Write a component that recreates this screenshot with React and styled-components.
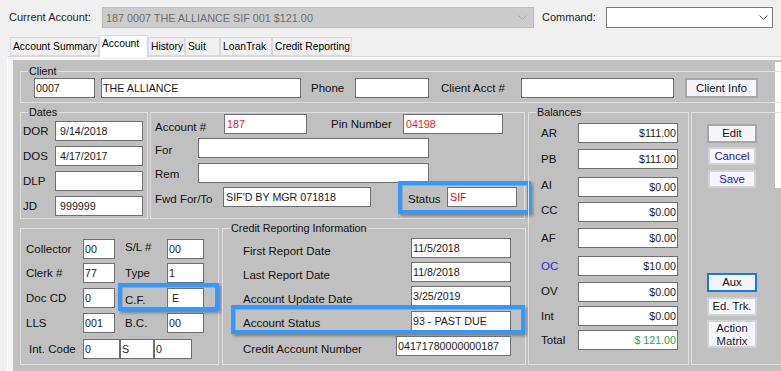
import React from "react";
import styled, { createGlobalStyle } from "styled-components";

const Global = createGlobalStyle`
  html, body { margin: 0; padding: 0; background: #f0f0f0; }
  body { font-family: "Liberation Sans", Arial, sans-serif; color: #111; overflow: hidden; }
  * { box-sizing: border-box; }
`;

const Screen = styled.div`
  width: 781px;
  height: 371px;
  display: flex;
  flex-direction: column;
  overflow: hidden;
`;

const TopBar = styled.div`
  display: flex;
  align-items: flex-start;
  height: 35px;
  padding: 7px 0 0 9px;
`;

const TopLabel = styled.div`
  width: ${p => p.$w}px;
  margin-left: ${p => p.$ml || 0}px;
  font-size: 11px;
  line-height: 21px;
  color: #1e1e1e;
`;

const Combo = styled.div`
  width: ${p => p.$w}px;
  height: 21px;
  display: flex;
  align-items: center;
  justify-content: space-between;
  padding: 0 ${p => (p.$disabled ? 6 : 4)}px 0 3px;
  border: 1px solid ${p => (p.$disabled ? "#bcbcbc" : "#7a7a7a")};
  background: ${p => (p.$disabled ? "#cccccc" : "#ffffff")};
  color: #6d6d6d;
  font-size: 10.8px;
  white-space: nowrap;
`;

const Chevron = ({ color }) => (
  <svg width="9" height="5" viewBox="0 0 9 5">
    <polyline points="0.5,0.5 4.5,4.5 8.5,0.5" fill="none" stroke={color} strokeWidth="1" />
  </svg>
);

const TabStrip = styled.div`
  display: flex;
  align-items: flex-end;
  height: 21px;
  padding-left: 10px;
`;

const Tab = styled.div`
  position: relative;
  z-index: ${p => (p.$active ? 1 : 0)};
  width: ${p => p.$w}px;
  height: ${p => (p.$active ? 22 : 19)}px;
  margin-bottom: ${p => (p.$active ? -1 : 0)}px;
  padding-left: 2px;
  border: 1px solid #d9d9d9;
  border-bottom: ${p => (p.$active ? "none" : "1px solid #d9d9d9")};
  background: ${p => (p.$active ? "#ffffff" : "#f0f0f0")};
  font-size: 10.3px;
  line-height: ${p => (p.$active ? 15 : 17)}px;
  white-space: nowrap;
  color: #000;
`;

const TabPage = styled.div`
  flex: 1;
  display: flex;
  margin-left: 7px;
  border-top: 1px solid #d9d9d9;
  border-left: 1px solid #ffffff;
  background: #f5f5f5;
  padding: 3px 0 0 5px;
`;

const Panel = styled.div`
  position: relative;
  flex: 1;
  overflow: hidden;
  background: #c0c0c0;
  padding: 11px 0 0 7px;
`;

const ScrollStrip = styled.div`
  position: absolute;
  top: 2px;
  right: 0;
  width: 6px;
  height: 126px;
  background: #ffffff;
`;

const Group = styled.div`
  position: relative;
  flex: none;
  display: flex;
  flex-direction: column;
  width: ${p => p.$w}px;
  height: ${p => p.$h}px;
  margin-left: ${p => p.$ml || 0}px;
  padding-left: ${p => p.$pl || 0}px;
  border: 1px solid #e0e0e0;
`;

const Legend = styled.div`
  position: absolute;
  top: -7px;
  left: 7px;
  padding: 0 1px;
  background: #c0c0c0;
  font-size: 10.8px;
  line-height: 13px;
  color: #111;
`;

const Main = styled.div`
  display: flex;
  align-items: flex-start;
  margin-top: 9px;
`;

const LeftCol = styled.div`
  width: 506px;
  display: flex;
  flex-direction: column;
  gap: 9px;
`;

const GroupRow = styled.div`
  display: flex;
  gap: ${p => p.$gap}px;
`;

const Row = styled.div`
  position: relative;
  display: flex;
  align-items: center;
  height: 20px;
  flex: none;
  margin-top: ${p => p.$mt || 0}px;
  justify-content: ${p => (p.$spread ? "space-between" : "flex-start")};
`;

const Label = styled.div`
  flex: none;
  width: ${p => (p.$w ? `${p.$w}px` : "auto")};
  margin-left: ${p => p.$ml || 0}px;
  margin-top: ${p => p.$dy || 0}px;
  font-size: 11.5px;
  line-height: 14px;
  white-space: nowrap;
  color: ${p => p.$color || "#111"};
`;

const Box = styled.div`
  flex: none;
  width: ${p => p.$w}px;
  height: 20px;
  margin-left: ${p => p.$ml || 0}px;
  padding: 0 1px 0 ${p => p.$pl ?? 1}px;
  border: 1px solid #6f6f6f;
  background: #ffffff;
  font-size: 10.7px;
  line-height: 18px;
  white-space: nowrap;
  overflow: hidden;
  text-align: ${p => (p.$right ? "right" : "left")};
  color: ${p => p.$color || "#1a1a1a"};
`;

const Cluster = styled.div`
  position: relative;
  display: flex;
  align-items: center;
  height: 20px;
  margin-left: ${p => p.$ml || 0}px;
`;

const Outline = styled.div`
  position: absolute;
  top: ${p => p.$t}px;
  right: ${p => p.$r}px;
  bottom: ${p => p.$b}px;
  left: ${p => p.$l}px;
  border: 4px solid #3399ff;
  box-shadow: 2px 2px 3px rgba(0, 0, 0, 0.35), inset 1px 1px 0 #a4a4a4;
  pointer-events: none;
`;

const tones = {
  plain: { border: "#a6a6a6", color: "#111" },
  soft: { border: "#d2d2d2", color: "#1a1aa8" },
  light: { border: "#d2d2d2", color: "#151530" },
  focus: { border: "#1a7ad6", color: "#111" },
};

const WinButton = styled.button`
  display: block;
  flex: none;
  width: ${p => p.$w}px;
  height: ${p => p.$h}px;
  margin: ${p => p.$mt || 0}px 0 0 ${p => p.$ml || 0}px;
  padding: 0;
  border: 2px solid ${p => tones[p.$tone].border};
  background: #f5f5fc;
  font-family: inherit;
  font-size: 11.3px;
  line-height: 13px;
  color: ${p => tones[p.$tone].color};
  text-align: center;
`;

const dates = [
  { k: "DOR", v: "9/14/2018", mt: 8 },
  { k: "DOS", v: "4/17/2017", mt: 5 },
  { k: "DLP", v: "", mt: 5 },
  { k: "JD", v: "999999", mt: 5 },
];

const codes = [
  { a: "Collector", av: "00", b: "S/L #", bv: "00", bdy: -4, mt: 10 },
  { a: "Clerk #", av: "77", b: "Type", bv: "1", mt: 4 },
  { a: "Doc CD", av: "0", b: "C.F.", bv: "E", bdy: 3, mt: 5, hl: true },
  { a: "LLS", av: "001", b: "B.C.", bv: "00", mt: 5 },
];

const credit = [
  { k: "First Report Date", v: "11/5/2018", w: 100, mt: 9 },
  { k: "Last Report Date", v: "11/8/2018", w: 100, mt: 4 },
  { k: "Account Update Date", v: "3/25/2019", w: 100, mt: 4 },
  { k: "Account Status", v: "93 - PAST DUE", w: 100, mt: 5, hl: true, dy: 4 },
  { k: "Credit Account Number", v: "04171780000000187", w: 115, mt: 5 },
];

const balances = [
  { k: "AR", v: "$111.00", mt: 10 },
  { k: "PB", v: "$111.00", mt: 6 },
  { k: "AI", v: "$0.00", mt: 8, dy: -5 },
  { k: "CC", v: "$0.00", mt: 5, dy: -5 },
  { k: "AF", v: "$0.00", mt: 6 },
  { k: "OC", v: "$10.00", mt: 8, color: "#2a2ad8" },
  { k: "OV", v: "$0.00", mt: 6, dy: -3 },
  { k: "Int", v: "$0.00", mt: 4 },
  { k: "Total", v: "$ 121.00", mt: 4, value: "#2e9a62" },
];

const tabs = [
  { t: "Account Summary", w: 89 },
  { t: "Account", w: 49, active: true },
  { t: "History", w: 37 },
  { t: "Suit", w: 35 },
  { t: "LoanTrak", w: 52 },
  { t: "Credit Reporting", w: 80 },
];

export default function App() {
  return (
    <Screen>
      <Global />
      <TopBar>
        <TopLabel $w={93}>Current Account:</TopLabel>
        <Combo $w={432} $disabled>
          <span>187 0007 THE ALLIANCE SIF 001 $121.00</span>
          <Chevron color="#a8a8a8" />
        </Combo>
        <TopLabel $w={64} $ml={8}>Command:</TopLabel>
        <Combo $w={167}>
          <span />
          <Chevron color="#4a4a4a" />
        </Combo>
      </TopBar>

      <TabStrip>
        {tabs.map(t => (
          <Tab key={t.t} $w={t.w} $active={t.active}>{t.t}</Tab>
        ))}
      </TabStrip>

      <TabPage>
        <Panel>
          <ScrollStrip />
          <Group $w={770} $h={32} $pl={13}>
            <Legend>Client</Legend>
            <Row $mt={6}>
              <Box $w={61}>0007</Box>
              <Box $w={200} $ml={6}>THE ALLIANCE</Box>
              <Label $w={44} $ml={10}>Phone</Label>
              <Box $w={74} />
              <Label $w={80} $ml={12}>Client Acct #</Label>
              <Box $w={153} />
              <WinButton $w={73} $h={20} $ml={11} $tone="plain">Client Info</WinButton>
            </Row>
          </Group>

          <Main>
            <LeftCol>
              <GroupRow $gap={2}>
                <Group $w={128} $h={107} $pl={2}>
                  <Legend>Dates</Legend>
                  {dates.map(d => (
                    <Row key={d.k} $mt={d.mt}>
                      <Label $w={32}>{d.k}</Label>
                      <Box $w={88} $pl={4}>{d.v}</Box>
                    </Row>
                  ))}
                </Group>
                <Group $w={375} $h={107} $pl={4}>
                  <Row $mt={1}>
                    <Label $w={69} $dy={5}>Account #</Label>
                    <Box $w={83} $pl={2} $color="#f01818">187</Box>
                    <Label $w={72} $ml={24}>Pin Number</Label>
                    <Box $w={100} $pl={2} $color="#f01818">04198</Box>
                  </Row>
                  <Row $mt={4}>
                    <Label $w={43} $dy={3}>For</Label>
                    <Box $w={231} />
                  </Row>
                  <Row $mt={5}>
                    <Label $w={43} $dy={1}>Rem</Label>
                    <Box $w={231} />
                  </Row>
                  <Row $mt={4}>
                    <Label $w={68} $dy={4}>Fwd For/To</Label>
                    <Box $w={148} $pl={2}>SIF'D BY MGR 071818</Box>
                    <Cluster $ml={37}>
                      <Label $w={39} $dy={3}>Status</Label>
                      <Box $w={70} $pl={2} $color="#d0102a">SIF</Box>
                      <Outline $t={-6} $r={-14} $b={-7} $l={-10} />
                    </Cluster>
                  </Row>
                </Group>
              </GroupRow>

              <GroupRow $gap={3}>
                <Group $w={199} $h={137} $pl={5}>
                  {codes.map(c => (
                    <Row key={c.a} $mt={c.mt}>
                      <Label $w={57}>{c.a}</Label>
                      <Box $w={32}>{c.av}</Box>
                      <Cluster $ml={10}>
                        <Label $w={42} $dy={c.bdy}>{c.b}</Label>
                        <Box $w={37} $pl={c.hl ? 4 : 1}>{c.bv}</Box>
                        {c.hl && <Outline $t={-5} $r={-15} $b={-3} $l={-7} />}
                      </Cluster>
                    </Row>
                  ))}
                  <Row $mt={6}>
                    <Label $w={54} $ml={3}>Int. Code</Label>
                    <Box $w={37}>0</Box>
                    <Box $w={34}>S</Box>
                    <Box $w={38}>0</Box>
                  </Row>
                </Group>
                <Group $w={304} $h={137} $pl={20}>
                  <Legend>Credit Reporting Information</Legend>
                  {credit.map(c => (
                    <Row key={c.k} $mt={c.mt} $spread style={{ width: 268 }}>
                      <Label $dy={c.dy ?? 5}>{c.k}</Label>
                      <Box $w={c.w}>{c.v}</Box>
                      {c.hl && <Outline $t={-6} $r={-14} $b={-3} $l={-12} />}
                    </Row>
                  ))}
                </Group>
              </GroupRow>
            </LeftCol>

            <Group $w={161} $h={253} $ml={2} $pl={12}>
              <Legend>Balances</Legend>
              {balances.map(b => (
                <Row key={b.k} $mt={b.mt}>
                  <Label $w={37} $dy={b.dy} $color={b.color}>{b.k}</Label>
                  <Box $w={100} $right $color={b.value}>{b.v}</Box>
                </Row>
              ))}
            </Group>

            <Group $w={100} $h={253} $ml={2} $pl={15}>
              <WinButton $w={50} $h={19} $mt={11} $tone="plain">Edit</WinButton>
              <WinButton $w={48} $h={18} $mt={4} $ml={1} $tone="soft">Cancel</WinButton>
              <WinButton $w={48} $h={18} $mt={5} $ml={1} $tone="soft">Save</WinButton>
              <WinButton $w={50} $h={19} $mt={85} $tone="focus">Aux</WinButton>
              <WinButton $w={50} $h={19} $mt={5} $tone="light">Ed. Trk.</WinButton>
              <WinButton $w={50} $h={28} $mt={4} $tone="light">Action<br />Matrix</WinButton>
            </Group>
          </Main>
        </Panel>
      </TabPage>
    </Screen>
  );
}
